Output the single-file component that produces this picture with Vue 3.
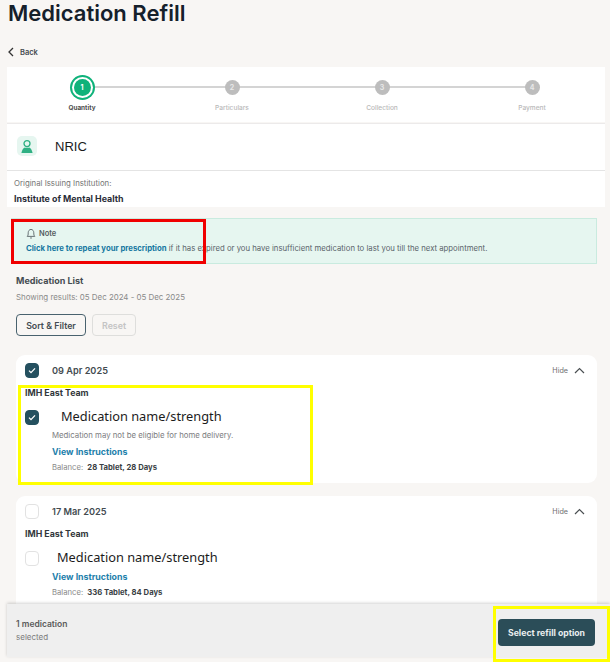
<script setup>
const steps = [
  { n: 1, label: 'Quantity', active: true },
  { n: 2, label: 'Particulars' },
  { n: 3, label: 'Collection' },
  { n: 4, label: 'Payment' }
]
const cards = [
  { date: '09 Apr 2025', checked: true, warn: true, balance: '28 Tablet, 28 Days' },
  { date: '17 Mar 2025', checked: false, warn: false, balance: '336 Tablet, 84 Days' }
]
</script>

<template>
  <div class="page">
    <h1 class="title">Medication Refill</h1>
    <div class="back">
      <svg width="8" height="10" viewBox="0 0 8 10"><path d="M6 1 2 5l4 4" fill="none" stroke="#333" stroke-width="1.3" /></svg>
      <span>Back</span>
    </div>

    <section class="panel stepper">
      <div class="rail"></div>
      <div v-for="s in steps" :key="s.n" class="step" :class="{ active: s.active }">
        <span class="dot-wrap"><span class="dot">{{ s.n }}</span></span>
        <span class="step-label">{{ s.label }}</span>
      </div>
    </section>

    <section class="panel nric">
      <span class="avatar">
        <svg width="14" height="15" viewBox="0 0 14 15">
          <circle cx="7" cy="4.6" r="3" fill="#e6f6f0" stroke="#2fb083" stroke-width="1.3" />
          <path d="M1.4 14c.5-2.6 1.6-5 3.4-5.6.7.6 3.7.6 4.4 0 1.8.6 2.9 3 3.4 5.6z" fill="#2fb083" />
        </svg>
      </span>
      <span class="nric-text">NRIC</span>
    </section>

    <section class="panel institution">
      <div class="inst-label">Original Issuing Institution:</div>
      <div class="inst-name">Institute of Mental Health</div>
    </section>

    <section class="note">
      <div class="note-head">
        <svg width="10" height="11" viewBox="0 0 10 11">
          <path d="M1.2 8.4c.9-.9 1-1.7 1-3.6C2.2 3 3.3 1.4 5 1.4S7.8 3 7.8 4.8c0 1.9.1 2.7 1 3.6zM4 9.6c.4.6 1.6.6 2 0" fill="none" stroke="#5a6468" stroke-width=".9" />
        </svg>
        <span>Note</span>
      </div>
      <p class="note-body"><a class="note-link">Click here to repeat your prescription</a> if it has expired or you have insufficient medication to last you till the next appointment.</p>
      <span class="mark mark-red"></span>
    </section>

    <h2 class="list-title">Medication List</h2>
    <p class="list-range">Showing results: 05 Dec 2024 - 05 Dec 2025</p>
    <div class="actions">
      <button class="btn">Sort &amp; Filter</button>
      <button class="btn disabled">Reset</button>
    </div>

    <section v-for="c in cards" :key="c.date" class="card">
      <div class="card-head">
        <span class="check" :class="{ on: c.checked }">
          <svg v-if="c.checked" width="8" height="7" viewBox="0 0 8 7"><path d="M1 3.6 3 5.6 7 1.4" fill="none" stroke="#fff" stroke-width="1.3" /></svg>
        </span>
        <span class="date">{{ c.date }}</span>
        <span class="hide">Hide</span>
        <svg class="chev" width="11" height="7" viewBox="0 0 11 7"><path d="M1 6 5.5 1.5 10 6" fill="none" stroke="#4a4f52" stroke-width="1.2" /></svg>
      </div>
      <div class="team">IMH East Team</div>
      <div class="med-row">
        <span class="check" :class="{ on: c.checked }">
          <svg v-if="c.checked" width="8" height="7" viewBox="0 0 8 7"><path d="M1 3.6 3 5.6 7 1.4" fill="none" stroke="#fff" stroke-width="1.3" /></svg>
        </span>
        <span class="med-name" :class="{ shifted: c.checked }">Medication name/strength</span>
      </div>
      <div class="med-detail">
        <p v-if="c.warn" class="warn">Medication may not be eligible for home delivery.</p>
        <a class="instr">View Instructions</a>
        <p class="balance">Balance: <b>{{ c.balance }}</b></p>
      </div>
    </section>

    <span class="mark mark-yellow-card"></span>

    <footer class="footer">
      <div class="sel">
        <div class="sel-count">1 medication</div>
        <div class="sel-word">selected</div>
      </div>
      <button class="primary">Select refill option</button>
    </footer>
    <span class="mark mark-yellow-btn"></span>
  </div>
</template>

<style>
html, body { margin: 0; background: #f8f6f4; }
</style>

<style scoped>
.page {
  position: relative;
  width: 610px;
  height: 662px;
  overflow: hidden;
  box-sizing: border-box;
  padding-left: 7px;
  background: #f8f6f4;
  font-family: Inter, "Liberation Sans", sans-serif;
  color: #1f2a30;
}
.title {
  margin: 0 0 0 1px;
  font-size: 22px;
  line-height: 26px;
  font-weight: 600;
  color: #15202b;
}
.back {
  display: flex;
  align-items: center;
  gap: 5px;
  margin-top: 19px;
  height: 14px;
  font-size: 7.5px;
  font-weight: 600;
  color: #454b4f;
}
.panel { background: #fff; width: 598px; }
.stepper {
  position: relative;
  display: grid;
  grid-template-columns: repeat(4, 150px);
  margin-top: 8px;
  height: 55px;
  box-sizing: border-box;
}
.rail {
  position: absolute;
  left: 75px;
  width: 450px;
  top: 19px;
  height: 2px;
  background: #d4d4d4;
}
.step {
  position: relative;
  display: flex;
  flex-direction: column;
  align-items: center;
}
.dot-wrap {
  display: flex;
  align-items: center;
  justify-content: center;
  height: 25px;
  margin-top: 8px;
}
.dot {
  display: flex;
  align-items: center;
  justify-content: center;
  width: 15px;
  height: 15px;
  border-radius: 50%;
  background: #bdbdbd;
  color: #e8e8e8;
  font-size: 7px;
  font-weight: 700;
}
.active .dot {
  width: 17px;
  height: 17px;
  background: #0fb27a;
  color: #fff;
  box-shadow: 0 0 0 2px #fff, 0 0 0 4px #0fb27a;
}
.step-label {
  margin-top: 4px;
  font-size: 6.6px;
  line-height: 9px;
  color: #b9b9b9;
  font-weight: 500;
}
.active .step-label { color: #4d4d4d; font-weight: 700; font-size: 6.4px; }
.nric {
  display: flex;
  align-items: center;
  margin-top: 1px;
  height: 47px;
  padding: 0 0 2px 10px;
  box-sizing: border-box;
  border-top: 1px solid #eceaea;
}
.avatar {
  display: flex;
  align-items: center;
  justify-content: center;
  width: 20px;
  height: 20px;
  border-radius: 5px;
  background: #e6f6f0;
}
.nric-text {
  margin-left: 18px;
  font-family: "Liberation Sans", sans-serif;
  font-size: 13px;
  color: #1a1a1a;
}
.institution {
  height: 37px;
  padding: 7px 0 0 7px;
  box-sizing: border-box;
  border-top: 1px solid #e4e4e4;
}
.inst-label { font-size: 7.8px; line-height: 11px; color: #757575; }
.inst-name { margin-top: 4px; font-size: 8.9px; line-height: 11px; font-weight: 700; color: #2a2e38; }
.note {
  position: relative;
  box-sizing: border-box;
  width: 586px;
  height: 46px;
  margin: 11px 0 0 4px;
  padding: 9px 14px;
  background: #e6f6f0;
  border: 1px solid #c9ebdf;
}
.note-head {
  display: flex;
  align-items: center;
  gap: 3px;
  font-size: 7.5px;
  line-height: 11px;
  font-weight: 600;
  color: #555c60;
}
.note-body {
  margin: 4px 0 0;
  font-size: 7.75px;
  line-height: 11px;
  color: #59636a;
  white-space: nowrap;
}
.note-link { color: #1476a0; font-weight: 700; }
.list-title {
  margin: 10px 0 0 9px;
  font-size: 9px;
  line-height: 13px;
  font-weight: 700;
  color: #454c52;
}
.list-range {
  margin: 5px 0 0 9px;
  font-size: 7.9px;
  line-height: 11px;
  color: #8a8a8a;
}
.actions { display: flex; gap: 6px; margin: 11px 0 0 9px; }
.btn {
  box-sizing: border-box;
  width: 70px;
  height: 22px;
  padding: 0;
  background: transparent;
  border: 1.5px solid #49626e;
  border-radius: 4px;
  font-family: inherit;
  font-size: 8.8px;
  font-weight: 600;
  color: #454c52;
}
.btn.disabled { width: 44px; border-color: #dededc; color: #c4c4c4; }
.card {
  box-sizing: border-box;
  width: 581px;
  margin: 0 0 13px 9px;
  padding: 8px 10px 0 9px;
  background: #fff;
  border-radius: 9px;
  height: 128px;
}
.actions + .card { margin-top: 19px; }
.card-head { display: flex; align-items: center; height: 15px; }
.check {
  box-sizing: border-box;
  display: flex;
  align-items: center;
  justify-content: center;
  width: 14px;
  height: 15px;
  border-radius: 4px;
  border: 1.5px solid #e2e2e2;
  background: #fff;
  flex: none;
}
.check.on { background: #24505f; border-color: #24505f; }
.date {
  margin-left: 13px;
  font-size: 9.2px;
  font-weight: 600;
  color: #434b50;
}
.hide { margin-left: auto; font-size: 7.2px; color: #6f6f6f; }
.chev { margin: 0 2px 0 6px; }
.team {
  margin-top: 9px;
  font-size: 8.8px;
  line-height: 11px;
  font-weight: 700;
  color: #33383c;
}
.med-row { display: flex; align-items: center; margin-top: 9px; height: 20px; }
.med-name {
  margin: 0 0 3px 18px;
  font-family: "Noto Sans", sans-serif;
  font-size: 12.8px;
  color: #1c1c1c;
}
.med-name.shifted { margin-left: 22px; }
.med-detail { margin-left: 27px; }
.warn { margin: 3px 0 4px; font-size: 7.8px; line-height: 11px; color: #7c7c80; }
.instr {
  display: block;
  margin-top: 2px;
  font-size: 8.8px;
  line-height: 13px;
  font-weight: 700;
  color: #1d80ab;
}
.balance { margin: 4px 0 0; font-size: 7.7px; line-height: 11px; color: #8a8a8a; }
.balance b { margin-left: 2px; color: #3a3f44; font-weight: 700; }
.footer {
  position: absolute;
  left: 7px;
  right: 0;
  top: 604px;
  height: 53px;
  display: flex;
  align-items: center;
  justify-content: space-between;
  padding: 0 15px 0 9px;
  box-sizing: border-box;
  background: #efefef;
  box-shadow: 0 -1px 3px rgba(0, 0, 0, .18);
}
.sel { margin-bottom: 1px; }
.sel-count { font-size: 8.5px; line-height: 12px; font-weight: 600; color: #5b5b5b; }
.sel-word { margin-top: 1px; font-size: 8px; line-height: 12px; color: #7c7c7c; }
.primary {
  width: 97px;
  height: 27px;
  margin-top: 4px;
  padding: 0;
  border: 0;
  border-radius: 4px;
  background: #2b4d58;
  color: #e9eeef;
  font-family: inherit;
  font-size: 8.7px;
  font-weight: 700;
}
.mark { position: absolute; box-sizing: border-box; pointer-events: none; }
.mark-red {
  left: -1px;
  top: 0;
  width: 195px;
  height: 45px;
  border: 3px solid #f00000;
}
.mark-yellow-card {
  left: 18px;
  top: 385px;
  width: 295px;
  height: 100px;
  border: 3px solid #ffff00;
}
.mark-yellow-btn {
  left: 493px;
  top: 606px;
  width: 117px;
  height: 56px;
  border: 3px solid #ffff00;
}
</style>
